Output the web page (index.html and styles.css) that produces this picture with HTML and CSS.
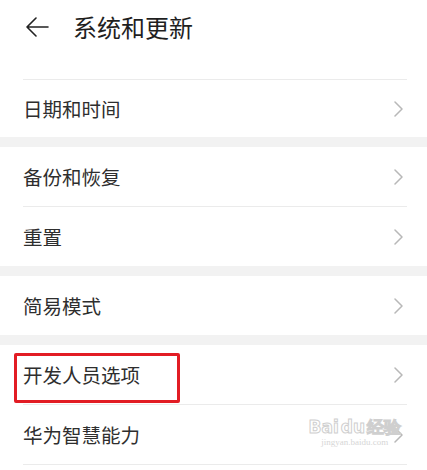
FILE: index.html
```html
<!DOCTYPE html>
<html lang="zh">
<head>
<meta charset="utf-8">
<title>系统和更新</title>
<link rel="stylesheet" href="styles.css">
</head>
<body>
<div class="page">
  <header class="header">
    <svg class="back" width="24" height="20" viewBox="0 0 24 20">
      <path d="M23 10H2M11 1L2 10l9 9" fill="none" stroke="#222" stroke-width="1.6" stroke-linecap="round" stroke-linejoin="round"/>
    </svg>
    <h1 class="title">系统和更新</h1>
  </header>
  <div class="group group-first">
    <div class="row row-short"><span class="label">日期和时间</span><svg class="chev" width="9" height="16" viewBox="0 0 9 16"><path d="M1 1l7 7-7 7" fill="none" stroke="#b8b8b8" stroke-width="1.5" stroke-linecap="round" stroke-linejoin="round"/></svg></div>
  </div>
  <div class="band"></div>
  <div class="group">
    <div class="row"><span class="label">备份和恢复</span><svg class="chev" width="9" height="16" viewBox="0 0 9 16"><path d="M1 1l7 7-7 7" fill="none" stroke="#b8b8b8" stroke-width="1.5" stroke-linecap="round" stroke-linejoin="round"/></svg></div>
    <div class="row"><span class="label">重置</span><svg class="chev" width="9" height="16" viewBox="0 0 9 16"><path d="M1 1l7 7-7 7" fill="none" stroke="#b8b8b8" stroke-width="1.5" stroke-linecap="round" stroke-linejoin="round"/></svg></div>
  </div>
  <div class="band"></div>
  <div class="group">
    <div class="row"><span class="label">简易模式</span><svg class="chev" width="9" height="16" viewBox="0 0 9 16"><path d="M1 1l7 7-7 7" fill="none" stroke="#b8b8b8" stroke-width="1.5" stroke-linecap="round" stroke-linejoin="round"/></svg></div>
  </div>
  <div class="band"></div>
  <div class="group">
    <div class="row"><span class="label">开发人员选项</span><svg class="chev" width="9" height="16" viewBox="0 0 9 16"><path d="M1 1l7 7-7 7" fill="none" stroke="#b8b8b8" stroke-width="1.5" stroke-linecap="round" stroke-linejoin="round"/></svg><span class="mark"></span></div>
    <div class="row row-last"><span class="label">华为智慧能力</span><svg class="chev" width="9" height="16" viewBox="0 0 9 16"><path d="M1 1l7 7-7 7" fill="none" stroke="#b8b8b8" stroke-width="1.5" stroke-linecap="round" stroke-linejoin="round"/></svg>
      <span class="watermark"><span class="wm-logo">Bai<span class="wm-paw">du</span>经验</span><span class="wm-url">jingyan.baidu.com</span></span>
    </div>
  </div>
</div>
</body>
</html>
```

FILE: styles.css
```css
html, body {
  margin: 0;
  padding: 0;
  background: #fff;
}
.page {
  width: 427px;
  height: 470px;
  overflow: hidden;
  font-family: "Noto Sans CJK SC", "Noto Sans", sans-serif;
  color: #2b2b2b;
}
.header {
  height: 79px;
  box-sizing: border-box;
  display: flex;
  align-items: flex-start;
  padding: 14px 0 0 25px;
}
.back {
  margin-top: 3px;
}
.title {
  margin: 0 0 0 24px;
  font-size: 24px;
  font-weight: 400;
  line-height: 26px;
  color: #1f1f1f;
}
.group {
  display: flex;
  flex-direction: column;
}
.row {
  position: relative;
  height: 59px;
  display: flex;
  align-items: center;
  justify-content: space-between;
  margin: 0 20px 0 23px;
  border-top: 1px solid #ebebeb;
}
.group > .row:first-child {
  border-top: none;
}
.group-first > .row:first-child {
  border-top: 1px solid #ebebeb;
}
.row-short {
  height: 57px;
}
.row-last {
  border-bottom: 1px solid #ebebeb;
}
.label {
  font-size: 19.5px;
  line-height: 24px;
  color: #2e2e2e;
}
.chev {
  display: block;
  margin-right: 4px;
}
.band {
  height: 10px;
  background: #f2f2f2;
}
.mark {
  position: absolute;
  left: -9px;
  top: 8px;
  width: 160px;
  height: 44px;
  border: 3px solid #e21c24;
  border-radius: 2px;
}
.watermark {
  position: absolute;
  right: 6px;
  top: 12px;
  display: flex;
  flex-direction: column;
  align-items: center;
  color: #d8d8d8;
  pointer-events: none;
}
.wm-logo {
  font-family: "DejaVu Sans", sans-serif;
  font-size: 17px;
  font-weight: 700;
  line-height: 20px;
  color: #fff;
  -webkit-text-stroke: 1px #cfcfcf;
}
.wm-paw {
  margin: 0 2px;
}
.wm-url {
  font-family: "Liberation Serif", serif;
  font-size: 9px;
  line-height: 11px;
  color: #d6d6d6;
}
```
